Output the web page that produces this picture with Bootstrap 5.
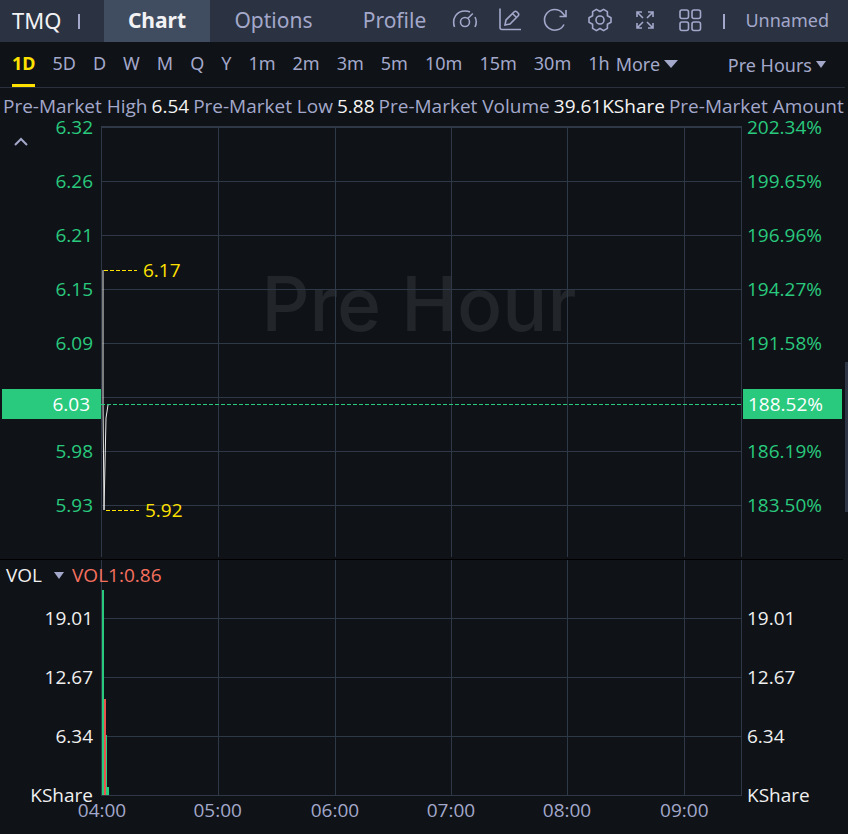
<!DOCTYPE html>
<html lang="en" data-bs-theme="dark">
<head>
<meta charset="utf-8">
<meta name="viewport" content="width=device-width, initial-scale=1">
<title>TMQ chart</title>
<link href="https://cdn.jsdelivr.net/npm/bootstrap@5.3.0/dist/css/bootstrap.min.css" rel="stylesheet">
<style>
:root{--muted:#a3a8cb;--up:#29c97e;--down:#f6705f;--line:#2e3847;--gold:#ffe100}
body{background:#0f1216;color:var(--muted);font-family:"Noto Sans","Open Sans",sans-serif;font-size:18px;line-height:24px}
button{background:none;border:0;padding:0;color:inherit;white-space:nowrap}
.topbar{background:#2b3241;height:42px;font-size:21px}
.symbol{color:#f2f2f4;font-size:22px;width:66px;padding-left:12px;padding-bottom:3px}
.tick{width:2px;height:15px;background:var(--muted)}
.tick-a{margin-left:12px}
.tick-b{margin-left:11px}
.tab{height:42px;padding-bottom:2px}
.tab-chart{width:106px;margin-left:24px}
.tab-options{width:127px}
.tab-profile{width:95px;margin-left:10px}
.tab-on{background:#404d60;color:#f2f2f4;font-weight:700}
.unnamed{font-size:18px;padding-bottom:3px;margin-right:19px}
.tool{width:45px;height:42px;padding-bottom:3px}
.tool svg,.fold svg{display:block;fill:none;stroke:var(--muted);stroke-width:1.6}
.fold svg{stroke-width:2}
.periods{height:46px;border-bottom:1px solid #2b313c;margin-right:3px;padding:0 19px 0 12px}
.periods .list{gap:17px}
.periods .list button{height:45px;padding-bottom:1px;border-bottom:3px solid transparent}
.periods .list .on{color:var(--gold);font-weight:700;border-color:var(--gold)}
.more{margin-left:6px;padding-bottom:2px}
.caret{width:0;height:0;border:7px solid transparent;border-top:8px solid var(--muted);border-bottom:0}
.caret.sm{border-width:7px 5px 0}
.stats,.axis,.plot,.volhead{font-family:"Open Sans","Noto Sans",sans-serif;font-size:19px}
.stats{padding:6px 3px 0;white-space:nowrap;overflow:hidden}
.stats b{color:#f4f4f4;font-weight:400}
.axis{line-height:18px}
.axis-l{width:101px;text-align:right}
.axis-l li{padding-right:8px}
.axis-r{width:106px}
.axis-r li{padding-left:5px}
.price li{margin-bottom:36px;color:var(--up)}
.price .now{background:var(--up);color:#fff;line-height:30px;margin:37px 6px 23px 1px}
.axis-l .now{margin:37px 0 23px 2px;padding-right:11px}
.price li:has(+ .now){margin-bottom:0}
.vol{padding-top:49px;color:#f0f0f0}
.vol li{margin-bottom:41px}
.plot{display:block;width:100%;overflow:visible}
.plot .g{fill:var(--line)}
.fold{left:14px;top:18px}
.split{height:1px;background:#000;margin-right:5px}
.volhead{left:6px;top:3px;color:#f0f0f0}
.vol-now{color:var(--down)}
.thumb-r{top:362px;right:0;width:3px;height:150px;background:#2e3645}
.thumb-b{bottom:0;left:346px;width:150px;height:3px;background:#2e3645}
</style>
<script src="https://cdn.jsdelivr.net/npm/bootstrap@5.3.0/dist/js/bootstrap.bundle.min.js"></script>
</head>
<body class="position-relative min-vh-100 overflow-hidden">
<nav class="topbar d-flex align-items-center">
  <span class="symbol">TMQ</span><span class="tick tick-a"></span>
  <button class="tab tab-chart tab-on">Chart</button>
  <button class="tab tab-options">Options</button>
  <button class="tab tab-profile">Profile</button>
  <button class="tool d-flex align-items-center justify-content-center" aria-label="Gauge"><svg width="26" height="26" viewBox="0 0 26 26"><path d="M2.500 20C-.5 11 5 4 13 4q3 0 5 1M23 10q2.500 5 0 10M15.800 11.500l5-5"/><circle cx="13" cy="15" r="4.500"/></svg></button>
  <button class="tool d-flex align-items-center justify-content-center" aria-label="Draw"><svg width="26" height="26" viewBox="0 0 26 26"><path d="M3 1.500v19q0 2 2 2h19M8 18l1-5 8-8q1.500-1.500 3 0l1 1q1.500 1.500 0 3l-8 8zM15.500 6.500l4 4"/></svg></button>
  <button class="tool d-flex align-items-center justify-content-center" aria-label="Refresh"><svg width="26" height="26" viewBox="0 0 26 26"><path d="M22 17.500A10.300 10.300 0 1 1 20.500 6L23 9M24 3v6.500h-6.500"/></svg></button>
  <button class="tool d-flex align-items-center justify-content-center" aria-label="Settings"><svg width="26" height="26" viewBox="0 0 26 26"><path d="M24 10.800V15.200L20.400 17.300V21.400L16.600 23.600 13 21.500 9.400 23.600 5.600 21.400V17.300L2 15.200V10.800L5.600 8.700V4.600L9.400 2.400 13 4.500 16.600 2.400 20.400 4.600V8.700z" stroke-linejoin="round"/><circle cx="13" cy="13" r="4"/></svg></button>
  <button class="tool d-flex align-items-center justify-content-center" aria-label="Full screen"><svg width="26" height="26" viewBox="0 0 26 26"><path d="M5 10V5h5M5 5l6 6M16 5h5v5M21 5l-6 6M5 16v5h5M5 21l6-6M21 16v5h-5M21 21l-6-6"/></svg></button>
  <button class="tool d-flex align-items-center justify-content-center" aria-label="Layout"><svg width="26" height="26" viewBox="0 0 26 26"><rect x="3" y="3" width="8.500" height="8.500" rx="2"/><rect x="15" y="3" width="8.500" height="8.500" rx="2"/><rect x="3" y="15" width="8.500" height="8.500" rx="2"/><rect x="15" y="15" width="8.500" height="8.500" rx="2"/></svg></button>
  <span class="tick tick-b"></span>
  <button class="unnamed ms-auto">Unnamed</button>
</nav>
<div class="periods d-flex align-items-center">
  <div class="list d-flex">
    <button class="on">1D</button><button>5D</button><button>D</button><button>W</button><button>M</button><button>Q</button><button>Y</button><button>1m</button><button>2m</button><button>3m</button><button>5m</button><button>10m</button><button>15m</button><button>30m</button><button>1h</button>
  </div>
  <button class="more d-flex align-items-center gap-1">More<span class="caret"></span></button>
  <button class="d-flex align-items-center gap-1 ms-auto">Pre Hours<span class="caret sm"></span></button>
</div>
<div class="stats d-flex gap-1"><span>Pre-Market High</span><b>6.54</b><span>Pre-Market Low</span><b>5.88</b><span>Pre-Market Volume</span><b>39.61KShare</b><span>Pre-Market Amount</span></div>
<main>
  <section class="d-flex position-relative">
    <button class="fold position-absolute" aria-label="Collapse"><svg width="14" height="12" viewBox="0 0 14 12"><path d="M1 9l6-6 6 6"/></svg></button>
    <ul class="axis axis-l price list-unstyled mb-0"><li>6.32</li><li>6.26</li><li>6.21</li><li>6.15</li><li>6.09</li><li class="now">6.03</li><li>5.98</li><li>5.93</li></ul>
    <div class="flex-grow-1">
      <svg class="plot" height="441">
        <text x="49.6%" y="213" text-anchor="middle" font-family="Inter, sans-serif" font-size="75" font-weight="500" fill="#222529">Pre Hour</text>
        <g class="g" shape-rendering="crispEdges">
          <rect y="8" width="100%" height="2"/><rect y="63" width="100%" height="1"/><rect y="117" width="100%" height="1"/><rect y="171" width="100%" height="1"/><rect y="225" width="100%" height="1"/><rect y="279" width="100%" height="1"/><rect y="333" width="100%" height="1"/><rect y="387" width="100%" height="1"/>
          <rect y="8" width="1" height="431"/><rect x="18.2%" y="8" width="1" height="431"/><rect x="36.5%" y="8" width="1" height="431"/><rect x="54.6%" y="8" width="1" height="431"/><rect x="72.700%" y="8" width="1" height="431"/><rect x="91%" y="8" width="1" height="431"/><rect x="99.900%" y="8" width="1" height="431"/>
        </g>
        <path d="M2 152L2 285 3 392 5 300 7 287" fill="none" stroke="#e8e8e8"/>
        <g fill="none" shape-rendering="crispEdges" stroke-dasharray="4 2"><svg y="286" width="100%" height="1"><line x1="0" x2="100%" y1="0" y2="0" stroke="#29c97e" stroke-width="2"/></svg><path d="M3 152h33M5 392h33" stroke="#ffe100"/></g>
        <g fill="#ffe100"><text x="42" y="159">6.17</text><text x="44" y="399">5.92</text></g>
      </svg>
    </div>
    <ul class="axis axis-r price list-unstyled mb-0"><li>202.34%</li><li>199.65%</li><li>196.96%</li><li>194.27%</li><li>191.58%</li><li class="now">188.52%</li><li>186.19%</li><li>183.50%</li></ul>
  </section>
  <div class="split"></div>
  <section class="d-flex position-relative">
    <div class="volhead position-absolute d-flex align-items-center"><button class="d-flex align-items-center gap-2 me-2">VOL <span class="caret sm ms-1"></span></button><span class="vol-now">VOL1:0.86</span></div>
    <ul class="axis axis-l vol list-unstyled mb-0"><li>19.01</li><li>12.67</li><li>6.34</li><li>KShare</li></ul>
    <div class="flex-grow-1">
      <svg class="plot" height="270">
        <g class="g" shape-rendering="crispEdges">
          <rect y="58" width="100%" height="1"/><rect y="117" width="100%" height="1"/><rect y="176" width="100%" height="1"/><rect y="235" width="100%" height="1"/>
          <rect width="1" height="236"/><rect x="18.2%" width="1" height="236"/><rect x="36.5%" width="1" height="236"/><rect x="54.6%" width="1" height="236"/><rect x="72.700%" width="1" height="236"/><rect x="91%" width="1" height="236"/><rect x="99.900%" width="1" height="236"/>
        </g>
        <g shape-rendering="crispEdges"><rect x="1" y="30" width="2" height="205" fill="#29c97e"/><rect x="3" y="139" width="2" height="96" fill="#e8544d"/><rect x="5" y="175" width="1" height="60" fill="#29c97e"/><rect x="6" y="227" width="2" height="8" fill="#29c97e"/></g>
        <g fill="#a3a8cb" text-anchor="middle"><text x="1" y="257">04:00</text><text x="18.2%" y="257">05:00</text><text x="36.5%" y="257">06:00</text><text x="54.6%" y="257">07:00</text><text x="72.700%" y="257">08:00</text><text x="91%" y="257">09:00</text></g>
      </svg>
    </div>
    <ul class="axis axis-r vol list-unstyled mb-0"><li>19.01</li><li>12.67</li><li>6.34</li><li>KShare</li></ul>
  </section>
</main>
<div class="thumb-r position-absolute"></div>
<div class="thumb-b position-absolute"></div>
</body>
</html>
